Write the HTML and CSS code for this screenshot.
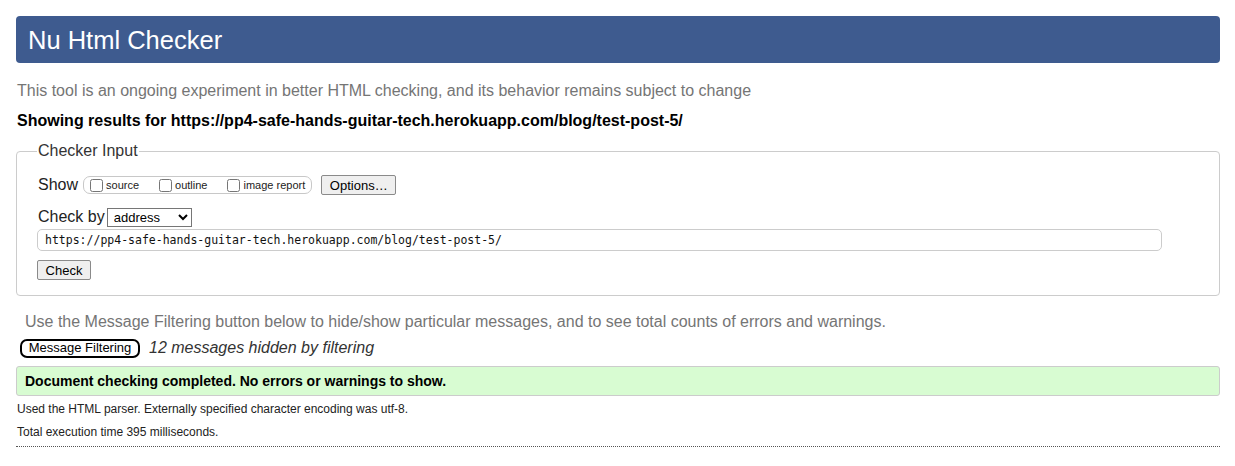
FILE: index.html
```html
<!DOCTYPE html>
<html>
<head>
<meta charset="utf-8">
<title>Nu Html Checker</title>
<link rel="stylesheet" href="styles.css">
</head>
<body>
<h1 class="title">Nu Html Checker</h1>
<p class="intro">This tool is an ongoing experiment in better HTML checking, and its behavior remains subject to change</p>
<p class="showing">Showing results for https://pp4-safe-hands-guitar-tech.herokuapp.com/blog/test-post-5/</p>
<fieldset class="input-box">
  <legend class="legend">Checker Input</legend>
  <div class="row show-row">
    <span class="row-label">Show</span>
    <span class="pill">
      <label class="opt"><input type="checkbox" class="cb">source</label>
      <label class="opt"><input type="checkbox" class="cb">outline</label>
      <label class="opt"><input type="checkbox" class="cb">image report</label>
    </span>
    <button class="btn options">Options…</button>
  </div>
  <div class="row checkby-row">
    <span class="row-label">Check by</span>
    <select class="select"><option>address</option></select>
  </div>
  <input class="url" type="text" value="https://pp4-safe-hands-guitar-tech.herokuapp.com/blog/test-post-5/">
  <div class="row">
    <button class="btn check">Check</button>
  </div>
</fieldset>
<p class="filter-note">Use the Message Filtering button below to hide/show particular messages, and to see total counts of errors and warnings.</p>
<div class="filter-row">
  <button class="filter-btn">Message Filtering</button>
  <span class="hidden-count">12 messages hidden by filtering</span>
</div>
<div class="success">Document checking completed. No errors or warnings to show.</div>
<p class="details">Used the HTML parser. Externally specified character encoding was utf-8.</p>
<p class="details">Total execution time 395 milliseconds.</p>
<hr class="rule">
</body>
</html>
```

FILE: styles.css
```css
html, body {
  background: #fff;
}
body {
  margin: 0;
  padding: 16px 15px 16px 16px;
  font-family: "Liberation Sans", Arial, sans-serif;
  color: #000;
}
.title {
  margin: 0;
  height: 47px;
  box-sizing: border-box;
  padding: 9px 12px 0;
  background: #3e5b8f;
  color: #fff;
  font-size: 25.5px;
  font-weight: normal;
  line-height: 30px;
  border-radius: 4px;
}
.intro {
  margin: 18px 0 0 1px;
  font-size: 16px;
  line-height: 19px;
  color: #757575;
}
.showing {
  margin: 11px 0 0 1px;
  font-size: 16px;
  font-weight: bold;
  line-height: 19px;
}
.input-box {
  margin: 12px 0 0;
  padding: 14px 20px 15px 20px;
  border: 1px solid #cccccc;
  border-radius: 4px;
  min-width: 0;
}
.legend {
  padding: 0 1px;
  margin-left: 0;
  font-size: 16px;
  color: #333;
}
.row {
  display: flex;
  align-items: center;
}
.row-label {
  font-size: 16px;
  color: #222;
  margin-left: 1px;
}
.show-row {
  height: 22px;
}
.pill {
  display: inline-flex;
  align-items: center;
  height: 18px;
  box-sizing: border-box;
  margin-left: 5px;
  padding: 0 6px 0 6px;
  border: 1px solid #c8c8c8;
  border-radius: 7px;
  font-size: 11px;
  color: #222;
}
.opt {
  display: inline-flex;
  align-items: center;
}
.opt + .opt {
  margin-left: 20px;
}
.cb {
  margin: 0 3px 0 0;
  width: 13px;
  height: 13px;
}
.btn {
  font-family: "Liberation Sans", Arial, sans-serif;
  font-size: 13px;
  line-height: 15px;
  padding: 1px 6px;
  background: #efefef;
  border: 1px solid #8a8a8a;
  border-radius: 2px;
  color: #000;
}
.options {
  margin-left: 9px;
  height: 20px;
  width: 75px;
}
.checkby-row {
  margin-top: 11px;
  height: 20px;
}
.select {
  margin-left: 2px;
  height: 19px;
  width: 85px;
  font-family: "Liberation Sans", Arial, sans-serif;
  font-size: 13px;
  padding: 0 0 0 2px;
  border: 1px solid #767676;
  border-radius: 0;
  background: #fff;
  color: #000;
}
.url {
  display: block;
  box-sizing: border-box;
  margin: 2px 0 0 0;
  width: 1125px;
  height: 22px;
  padding: 0 7px;
  font-family: "DejaVu Sans Mono", "Liberation Mono", monospace;
  font-size: 11.5px;
  color: #111;
  border: 1px solid #cccccc;
  border-radius: 5px;
}
.check {
  margin-top: 9px;
  height: 20px;
  width: 54px;
}
.filter-note {
  margin: 16px 0 0 9px;
  font-size: 16px;
  line-height: 19px;
  color: #757575;
}
.filter-row {
  display: flex;
  align-items: center;
  margin: 7px 0 0 4px;
  height: 20px;
}
.filter-btn {
  height: 19px;
  width: 120px;
  padding: 0;
  font-family: "Liberation Sans", Arial, sans-serif;
  font-size: 13px;
  line-height: 14px;
  background: #fff;
  border: 2px solid #000;
  border-radius: 7px;
  color: #000;
}
.hidden-count {
  margin-left: 9px;
  font-size: 16px;
  font-style: italic;
  color: #333;
}
.success {
  margin-top: 8px;
  height: 30px;
  box-sizing: border-box;
  padding: 6px 8px 0;
  background: #d8fcd2;
  border: 1px solid #cccccc;
  border-radius: 3px;
  font-size: 14px;
  font-weight: bold;
  line-height: 16px;
}
.details {
  margin: 5px 0 0 1px;
  font-size: 12px;
  line-height: 16px;
  color: #222;
}
.details + .details {
  margin-top: 7px;
}
.rule {
  margin: 6px 0 0;
  border: 0;
  border-top: 1px dotted #555;
  height: 0;
}
```
